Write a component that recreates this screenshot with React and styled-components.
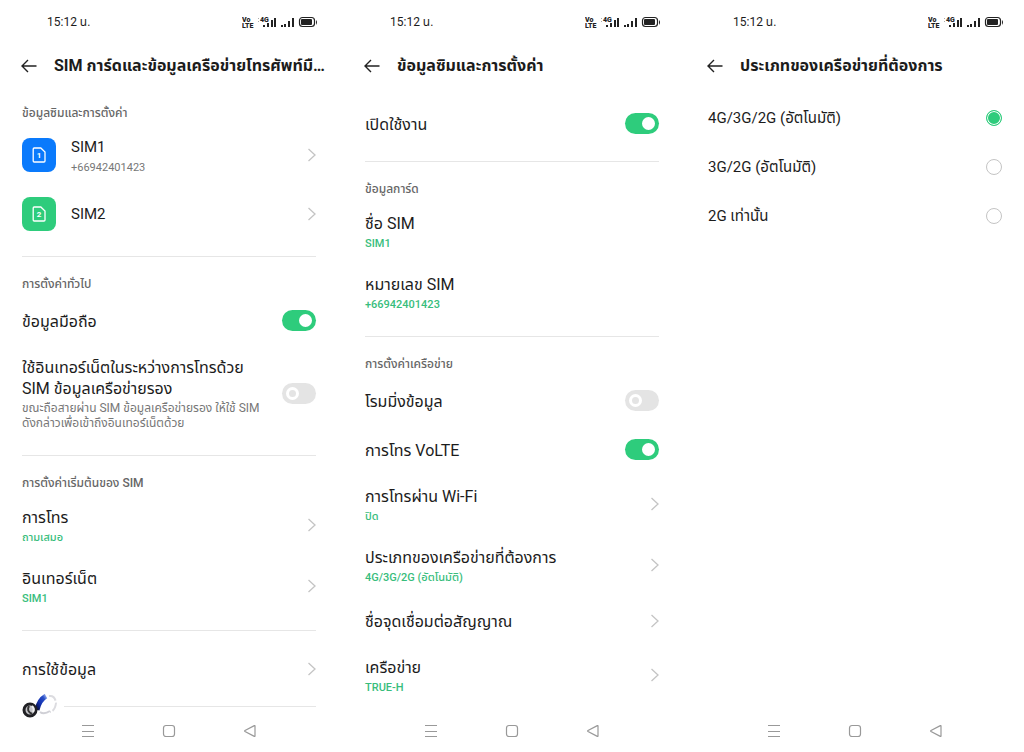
import React, { useState } from "react";
import styled, { createGlobalStyle } from "styled-components";

const statusIcons = (
  <svg width="76" height="14" viewBox="0 0 76 14" aria-hidden="true">
    <g fill="#222" fontFamily="Roboto, sans-serif" fontWeight="900">
      <text x="0" y="7" fontSize="7">Vo</text>
      <text x="0" y="13" fontSize="7">LTE</text>
      <text x="18" y="7" fontSize="7">4G</text>
    </g>
    <path d="M16.500 3v1M16.500 6v1" stroke="#aaa" />
    <g fill="#222">
      <path d="M21 10h2v2h-2zM25 8h2v4h-2zM29 5h2v7h-2zM32 3h2v9h-2z" />
      <path d="M39 10h2v2h-2zM42 9h2v3h-2zM46 6h2v6h-2zM50 3h2v9h-2z" />
      <rect x="59" y="4" width="11" height="6" rx="1" />
      <path d="M74 5q2 2 0 5z" />
    </g>
    <rect x="57.500" y="2.500" width="15" height="9" rx="3" fill="none" stroke="#222" strokeWidth="1.2" />
  </svg>
);

const BackIcon = () => (
  <svg width="16" height="14" viewBox="0 0 16 14" fill="none" stroke="#222" strokeWidth="1.4">
    <path d="M15.500 7H1M7 1L1 7l6 6" />
  </svg>
);

const Chevron = () => (
  <svg width="9" height="14" viewBox="0 0 9 14" fill="none" stroke="#c4c4c4" strokeWidth="1.3">
    <path d="M1.500 1L8 7l-6.500 6" />
  </svg>
);

const SimIcon = ({ number }) => (
  <svg width="14" height="16" viewBox="0 0 14 16">
    <path
      d="M2.200 1h6.600L13 5v9q0 1-1 1H2.200q-1 0-1-1V2q0-1 1-1z"
      fill="none"
      stroke="#fff"
      strokeWidth="1.3"
    />
    <text x="7" y="11" fontSize="8" fontWeight="700" textAnchor="middle" fill="#fff">
      {number}
    </text>
  </svg>
);

const Watermark = () => (
  <svg width="42" height="25" viewBox="0 0 42 25" aria-hidden="true">
    <defs>
      <linearGradient id="stroke" x1="0" y1="1" x2="1" y2="0">
        <stop offset="0" stopColor="#0a0f35" />
        <stop offset="0.4" stopColor="#1230b0" />
        <stop offset="0.8" stopColor="#2a50c8" />
        <stop offset="1" stopColor="#8ea6ea" />
      </linearGradient>
    </defs>
    <rect width="42" height="25" fill="#fff" />
    <path d="M27 2q6-1 7 7-1 8-6 9" fill="none" stroke="#dcdce0" strokeWidth="2" strokeDasharray="9 2" />
    <path d="M28 17q-6 4-10 1" fill="none" stroke="#d0d0d6" strokeWidth="2" />
    <path d="M15 16Q17 6 24 2" fill="none" stroke="url(#stroke)" strokeWidth="5" />
    <circle cx="8" cy="16" r="6" fill="#c4c4c8" stroke="#202024" strokeWidth="3" />
    <path d="M7 12q-3 5 3 8" fill="none" stroke="#333" strokeWidth="2" />
    <path d="M10 12q3 3 1 6" fill="none" stroke="#eee" strokeWidth="2" />
  </svg>
);

const Screen = ({ title, compact, children }) => (
  <Phone>
    <StatusBar>
      <span>15:12 น.</span>
      {statusIcons}
    </StatusBar>
    <Header>
      <IconButton aria-label="ย้อนกลับ">
        <BackIcon />
      </IconButton>
      <h1>{title}</h1>
    </Header>
    <Content $compact={compact}>{children}</Content>
    <NavBar>
      <IconButton aria-label="เมนู">
        <svg width="14" height="14" viewBox="0 0 14 14" stroke="#999">
          <path d="M1 1.500h12M1 7.500h12M1 12.500h12" />
        </svg>
      </IconButton>
      <IconButton aria-label="หน้าหลัก">
        <svg width="14" height="14" viewBox="0 0 14 14" fill="none" stroke="#999" strokeWidth="1.2">
          <rect x="1.500" y="1.500" width="11" height="11" rx="2.500" />
        </svg>
      </IconButton>
      <IconButton aria-label="กลับ">
        <svg width="14" height="14" viewBox="0 0 14 14" fill="none" stroke="#999" strokeWidth="1.2">
          <path d="M12 2v10q0 .7-.7.4L2 7.500q-.8-.5 0-1L11.300 1.600q.7-.3.7.4z" />
        </svg>
      </IconButton>
    </NavBar>
  </Phone>
);

const LinkRow = ({ title, value, muted, icon }) => (
  <RowLink href="#" $hasValue={value} $hasIcon={icon}>
    {icon}
    <Labels>
      <Title $small={icon}>{title}</Title>
      {value && <Value $muted={muted}>{value}</Value>}
    </Labels>
    <Chevron />
  </RowLink>
);

const SwitchRow = ({ title, description, on }) => {
  const [checked, setChecked] = useState(Boolean(on));
  return (
    <RowLabel $hasValue={description}>
      <Labels>
        <Title>{title}</Title>
        {description && <Description>{description}</Description>}
      </Labels>
      <Switch type="checkbox" checked={checked} onChange={() => setChecked(!checked)} />
    </RowLabel>
  );
};

const InfoRow = ({ title, value }) => (
  <Row $hasValue>
    <Labels>
      <Title>{title}</Title>
      <Value>{value}</Value>
    </Labels>
  </Row>
);

const networkTypes = ["4G/3G/2G (อัตโนมัติ)", "3G/2G (อัตโนมัติ)", "2G เท่านั้น"];

const App = () => {
  const [network, setNetwork] = useState(networkTypes[0]);

  return (
    <>
      <GlobalStyle />
      <Board>
        <Screen title="SIM การ์ดและข้อมูลเครือข่ายโทรศัพท์มื…">
          <SectionTitle>ข้อมูลซิมและการตั้งค่า</SectionTitle>
          <LinkRow
            title="SIM1"
            value="+66942401423"
            muted
            icon={
              <SimBadge $color="#0a7afc">
                <SimIcon number="1" />
              </SimBadge>
            }
          />
          <LinkRow
            title="SIM2"
            icon={
              <SimBadge $color="#2ecc7c">
                <SimIcon number="2" />
              </SimBadge>
            }
          />
          <Divider />
          <SectionTitle>การตั้งค่าทั่วไป</SectionTitle>
          <SwitchRow title="ข้อมูลมือถือ" on />
          <SwitchRow
            title={
              <>
                ใช้อินเทอร์เน็ตในระหว่างการโทรด้วย
                <br />
                SIM ข้อมูลเครือข่ายรอง
              </>
            }
            description={
              <>
                ขณะถือสายผ่าน SIM ข้อมูลเครือข่ายรอง ให้ใช้ SIM
                <br />
                ดังกล่าวเพื่อเข้าถึงอินเทอร์เน็ตด้วย
              </>
            }
          />
          <Divider />
          <SectionTitle>การตั้งค่าเริ่มต้นของ SIM</SectionTitle>
          <LinkRow title="การโทร" value="ถามเสมอ" />
          <LinkRow title="อินเทอร์เน็ต" value="SIM1" />
          <Divider />
          <LinkRow title="การใช้ข้อมูล" />
          <Divider />
          <WatermarkSpot>
            <Watermark />
          </WatermarkSpot>
        </Screen>

        <Screen title="ข้อมูลซิมและการตั้งค่า">
          <SwitchRow title="เปิดใช้งาน" on />
          <Divider />
          <SectionTitle>ข้อมูลการ์ด</SectionTitle>
          <InfoRow title="ชื่อ SIM" value="SIM1" />
          <InfoRow title="หมายเลข SIM" value="+66942401423" />
          <Divider />
          <SectionTitle>การตั้งค่าเครือข่าย</SectionTitle>
          <SwitchRow title="โรมมิ่งข้อมูล" />
          <SwitchRow title="การโทร VoLTE" on />
          <LinkRow title="การโทรผ่าน Wi-Fi" value="ปิด" />
          <LinkRow title="ประเภทของเครือข่ายที่ต้องการ" value="4G/3G/2G (อัตโนมัติ)" />
          <LinkRow title="ชื่อจุดเชื่อมต่อสัญญาณ" />
          <LinkRow title="เครือข่าย" value="TRUE-H" />
        </Screen>

        <Screen title="ประเภทของเครือข่ายที่ต้องการ" compact>
          {networkTypes.map((type) => (
            <RowLabel key={type}>
              <Labels>
                <Title $small>{type}</Title>
              </Labels>
              <Radio
                type="radio"
                name="network"
                checked={network === type}
                onChange={() => setNetwork(type)}
              />
            </RowLabel>
          ))}
        </Screen>
      </Board>
    </>
  );
};

const GlobalStyle = createGlobalStyle`
  *,
  *::before {
    box-sizing: border-box;
  }
  body {
    margin: 0;
    background-color: #fff;
    color: #1c1c1c;
    font-family: Roboto, "Noto Sans Thai", "Noto Sans", sans-serif;
  }
`;

const Board = styled.main`
  display: grid;
  grid-template-columns: repeat(3, minmax(0, 1fr));
  gap: 5px;
  min-height: 100vh;
`;

const Phone = styled.section`
  display: flex;
  flex-direction: column;
`;

const StatusBar = styled.div`
  display: flex;
  justify-content: space-between;
  align-items: center;
  height: 44px;
  padding: 0 20px 0 47px;
  font-size: 12px;
  line-height: 16px;
`;

const Header = styled.header`
  display: flex;
  align-items: center;
  gap: 17px;
  height: 44px;
  padding: 0 8px 0 21px;
  h1 {
    margin: 0;
    font-size: 16px;
    line-height: 24px;
    font-weight: 700;
    white-space: nowrap;
  }
`;

const IconButton = styled.button`
  display: flex;
  padding: 0;
  border: 0;
  background: none;
  cursor: pointer;
`;

const Content = styled.div`
  position: relative;
  flex: 1;
  padding: ${(props) => (props.$compact ? "5px" : "11px")} 22px 0;
`;

const SectionTitle = styled.h2`
  margin: 0;
  padding-top: 2px;
  font-size: 12px;
  line-height: 24px;
  font-weight: 500;
  color: #666;
`;

const Row = styled.div`
  display: flex;
  justify-content: space-between;
  align-items: center;
  gap: 15px;
  padding: ${(props) => (props.$hasValue ? "10px 0 11px" : "13px 0")};
`;

const RowLabel = styled(Row).attrs({ as: "label" })`
  cursor: pointer;
`;

const RowLink = styled(Row).attrs({ as: "a" })`
  color: inherit;
  text-decoration: none;
  ${(props) => props.$hasIcon && "height: 59px; padding: 0;"}
`;

const Labels = styled.div`
  display: flex;
  flex: 1;
  flex-direction: column;
  gap: 2px;
  padding-top: 2px;
  white-space: nowrap;
`;

const Title = styled.span`
  font-size: ${(props) => (props.$small ? "15px" : "16px")};
  line-height: 21px;
`;

const Value = styled.span`
  font-size: 11px;
  line-height: 15px;
  font-weight: ${(props) => (props.$muted ? 400 : 500)};
  color: ${(props) => (props.$muted ? "#777" : "#38bd7c")};
`;

const Description = styled.span`
  font-size: 12px;
  line-height: 15px;
  color: #777;
`;

const SimBadge = styled.span`
  display: flex;
  justify-content: center;
  align-items: center;
  width: 34px;
  height: 34px;
  border-radius: 8px;
  background-color: ${(props) => props.$color};
`;

const Divider = styled.hr`
  height: 1px;
  margin: 13px 0;
  border: 0;
  background-color: #e6e6e6;
  &:nth-last-child(2) {
    margin-bottom: 0;
  }
`;

const Switch = styled.input`
  appearance: none;
  display: flex;
  align-items: center;
  width: 34px;
  height: 21px;
  margin: 0;
  padding: 0 4px;
  border-radius: 11px;
  background-color: #e4e4e4;
  cursor: pointer;
  &::before {
    content: "";
    width: 13px;
    height: 13px;
    border: 3px solid #fff;
    border-radius: 50%;
  }
  &:checked {
    justify-content: flex-end;
    background-color: #2ecc7c;
  }
  &:checked::before {
    background-color: #fff;
  }
`;

const Radio = styled.input`
  appearance: none;
  width: 16px;
  height: 16px;
  margin: 0;
  border: 1px solid #c4c4c4;
  border-radius: 50%;
  cursor: pointer;
  &:checked {
    border-color: #2ecc7c;
    background-color: #2ecc7c;
    box-shadow: inset 0 0 0 1px #fff;
  }
`;

const WatermarkSpot = styled.div`
  position: absolute;
  bottom: -9px;
  left: 22px;
  display: flex;
`;

const NavBar = styled.nav`
  display: flex;
  justify-content: center;
  align-items: center;
  gap: 67px;
  height: 42px;
`;

export default App;
